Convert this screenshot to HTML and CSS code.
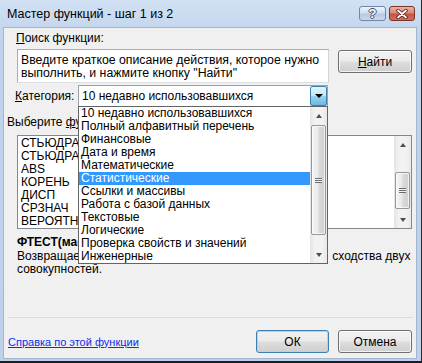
FILE: index.html
```html
<!DOCTYPE html>
<html lang="ru">
<head>
    <meta charset="UTF-8">
    <title>Мастер функций - шаг 1 из 2</title>
    <link rel="stylesheet" href="styles.css">
</head>
<body>
    <div class="window">
        <div class="titlebar">
            <span class="title">Мастер функций - шаг 1 из 2</span>
            <div class="caption-buttons">
                <span class="cap-btn help">?</span>
                <span class="cap-btn close">
                    <svg width="12" height="10" viewBox="0 0 12 10">
                        <path d="M2 1.5 L10 8.5 M10 1.5 L2 8.5" stroke="#4a1a14" stroke-width="3.4" stroke-linecap="round"/>
                        <path d="M2 1.5 L10 8.5 M10 1.5 L2 8.5" stroke="#ffffff" stroke-width="1.8" stroke-linecap="round"/>
                    </svg>
                </span>
            </div>
        </div>

        <div class="client">
            <div class="search-label"><u>П</u>оиск функции:</div>
            <div class="search-row">
                <div class="search-box">Введите краткое описание действия, которое нужно<br>выполнить, и нажмите кнопку "Найти"</div>
                <button class="btn find-btn"><u>Н</u>айти</button>
            </div>

            <div class="category-row">
                <span class="category-label"><u>К</u>атегория:</span>
                <div class="combo">
                    <span class="combo-text">10 недавно использовавшихся</span>
                    <span class="combo-arrow"><span class="tri-down dark"></span></span>
                </div>
            </div>

            <div class="func-label">Выберите <u>ф</u>ункцию:</div>
            <div class="func-list">
                <div class="func-items">
                    <div>СТЬЮДРАСП</div>
                    <div>СТЬЮДРАСПОБР</div>
                    <div>ABS</div>
                    <div>КОРЕНЬ</div>
                    <div>ДИСП</div>
                    <div>СРЗНАЧ</div>
                    <div>ВЕРОЯТНОСТЬ</div>
                </div>
                <div class="scrollbar">
                    <div class="sb-arrow"><span class="tri-up"></span></div>
                    <div class="sb-track"><div class="sb-thumb small"><span class="grip"></span></div></div>
                    <div class="sb-arrow"><span class="tri-down"></span></div>
                </div>
            </div>

            <div class="func-sig">ФТЕСТ(массив1;массив2)</div>
            <div class="func-desc">
                <div class="desc-line"><span class="desc-lead">Возвращает результат F-теста, вероятность</span> сходства двух</div>
                <div class="desc-line">совокупностей.</div>
            </div>

            <div class="footer">
                <div class="separator"></div>
                <div class="footer-row">
                    <a class="help-link" href="#">Справка по этой функции</a>
                    <button class="btn ok-btn">ОК</button>
                    <button class="btn cancel-btn">Отмена</button>
                </div>
            </div>
        </div>

        <div class="dropdown">
            <div class="dd-items">
                <div>10 недавно использовавшихся</div>
                <div>Полный алфавитный перечень</div>
                <div>Финансовые</div>
                <div>Дата и время</div>
                <div>Математические</div>
                <div class="selected">Статистические</div>
                <div>Ссылки и массивы</div>
                <div>Работа с базой данных</div>
                <div>Текстовые</div>
                <div>Логические</div>
                <div>Проверка свойств и значений</div>
                <div>Инженерные</div>
            </div>
            <div class="scrollbar">
                <div class="sb-arrow"><span class="tri-up"></span></div>
                <div class="sb-track"><div class="sb-thumb large"><span class="grip"></span></div></div>
                <div class="sb-arrow"><span class="tri-down"></span></div>
            </div>
        </div>
    </div>
</body>
</html>
```

FILE: styles.css
```css
* {
    box-sizing: border-box;
}
body {
    margin: 0;
    font-family: "Liberation Sans", Arial, sans-serif;
    font-size: 12px;
    color: #000;
}
u {
    text-decoration: underline;
}
.window {
    position: relative;
    width: 422px;
    height: 363px;
    display: flex;
    flex-direction: column;
    padding: 0 4px 2px 3px;
    background: linear-gradient(#d2e1f3, #bfd3ec 40px, #bdd1ea);
    border-right: 1px solid #2a2a2a;
    border-bottom: 2px solid #1c1c1c;
}

/* title bar */
.titlebar {
    height: 27px;
    display: flex;
    align-items: flex-start;
    justify-content: space-between;
}
.title {
    margin: 6px 0 0 4px;
    font-size: 12.5px;
    line-height: 16px;
}
.caption-buttons {
    display: flex;
    gap: 3px;
    margin: 6px 2px 0 0;
}
.cap-btn {
    height: 15px;
    border-radius: 3px;
    display: flex;
    align-items: center;
    justify-content: center;
}
.cap-btn.help {
    width: 27px;
    border: 1px solid #7187a8;
    background: linear-gradient(#edf3fa, #d0deef 45%, #b7cae3 55%, #c8d8ed);
    color: #fff;
    font-weight: bold;
    font-size: 13px;
    line-height: 13px;
    text-shadow: 1px 0 #3c4d66, -1px 0 #3c4d66, 0 1px #3c4d66, 0 -1px #3c4d66;
}
.cap-btn.close {
    width: 26px;
    border: 1px solid #7c3328;
    background: linear-gradient(#eab2a6, #d98a7a 45%, #c4533f 55%, #d0705d);
}

/* client area */
.client {
    flex: 1;
    display: flex;
    flex-direction: column;
    background: #f0f0f0;
    border: 1px solid #a3b6cf;
}
.search-label {
    margin: 3px 0 0 12px;
    line-height: 15px;
}
.search-row {
    display: flex;
    align-items: flex-start;
    margin: 3px 0 0 13px;
}
.search-box {
    width: 312px;
    height: 34px;
    padding: 4px 3px 0;
    font-size: 12.3px;
    line-height: 13px;
    background: #fff;
    border: 1px solid #abadb3;
    border-bottom-color: #dcdfe4;
    border-right-color: #cfd3da;
}
.btn {
    height: 23px;
    padding: 0;
    font-family: inherit;
    font-size: 12px;
    color: #000;
    border: 1px solid #707070;
    border-radius: 3px;
    background: linear-gradient(#f2f2f2, #ebebeb 48%, #dddddd 52%, #cfcfcf);
    box-shadow: inset 0 0 0 1px rgba(255,255,255,0.75);
}
.find-btn {
    width: 74px;
    margin: 1px 0 0 9px;
}
.category-row {
    display: flex;
    align-items: center;
    margin: 2px 0 0 11px;
}
.category-label {
    width: 63px;
    line-height: 15px;
}
.combo {
    width: 250px;
    height: 22px;
    display: flex;
    align-items: center;
    background: #fff;
    border: 1px solid #9aa3ad;
}
.combo-text {
    flex: 1;
    padding-left: 3px;
}
.combo-arrow {
    width: 17px;
    height: 20px;
    display: flex;
    align-items: center;
    justify-content: center;
    border: 1px solid #3c7fb1;
    border-radius: 2px;
    background: linear-gradient(#e5f4fc, #c4e5f6 48%, #98d1ef 52%, #6cb8e0);
}
.func-label {
    margin: 8px 0 0 3px;
    line-height: 15px;
}
.func-list {
    display: flex;
    width: 395px;
    height: 94px;
    margin: 5px 0 0 13px;
    background: #fff;
    border: 1px solid #828790;
}
.func-items {
    flex: 1;
    padding: 1px 0 0 3px;
    line-height: 13px;
}
.func-sig {
    margin: 6px 0 0 13px;
    font-weight: bold;
    line-height: 14px;
}
.func-desc {
    margin: 1px 0 0 13px;
    line-height: 13px;
}
.desc-line {
    white-space: nowrap;
}
.desc-lead {
    display: inline-block;
    width: 312px;
    vertical-align: top;
}
.footer {
    margin-top: auto;
    padding-bottom: 5px;
}
.separator {
    height: 1px;
    margin: 0 3px 0 4px;
    background: #d5dde6;
}
.footer-row {
    display: flex;
    align-items: center;
    margin-top: 12px;
    padding: 0 4px;
}
.help-link {
    color: #0b2ee8;
    font-size: 11px;
    text-decoration: underline;
    margin-right: auto;
}
.ok-btn {
    width: 73px;
    border-color: #3c7fb1;
    box-shadow: inset 0 0 0 1px #a6d8f6;
}
.cancel-btn {
    width: 74px;
    margin-left: 9px;
}

/* scrollbars */
.scrollbar {
    width: 17px;
    display: flex;
    flex-direction: column;
    background: linear-gradient(90deg, #e4e4e4, #f2f2f2 30%, #f2f2f2 70%, #e8e8e8);
}
.sb-arrow {
    height: 17px;
    flex: none;
    display: flex;
    align-items: center;
    justify-content: center;
}
.sb-track {
    flex: 1;
}
.sb-thumb {
    margin: 0 1px;
    display: flex;
    align-items: center;
    justify-content: center;
    border: 1px solid #979797;
    border-radius: 2px;
    background: linear-gradient(90deg, #f4f4f4, #e9e9e9 45%, #d9d9d9 55%, #d0d0d0);
    box-shadow: inset 0 0 0 1px rgba(255,255,255,0.7);
}
.sb-thumb.large {
    margin-top: 1px;
    height: 110px;
}
.sb-thumb.small {
    margin-top: 19px;
    height: 37px;
}
.grip {
    width: 7px;
    height: 5px;
    background: repeating-linear-gradient(#6b6b6b 0 1px, #f4f4f4 1px 2px);
}
.tri-up {
    width: 0;
    height: 0;
    border-left: 3.5px solid transparent;
    border-right: 3.5px solid transparent;
    border-bottom: 4px solid #4f4f4f;
}
.tri-down {
    width: 0;
    height: 0;
    border-left: 3.5px solid transparent;
    border-right: 3.5px solid transparent;
    border-top: 4px solid #4f4f4f;
}
.tri-down.dark {
    border-left-width: 4px;
    border-right-width: 4px;
    border-top: 4px solid #000;
}

/* open category list */
.dropdown {
    position: absolute;
    left: 78px;
    top: 106px;
    width: 250px;
    height: 158px;
    display: flex;
    background: #fff;
    border: 1px solid #646464;
}
.dd-items {
    flex: 1;
    line-height: 13px;
}
.dd-items div {
    padding-left: 2px;
    white-space: nowrap;
    overflow: hidden;
}
.dd-items .selected {
    color: #fff;
    background: #3399ff;
    outline: 1px dotted #b07a3a;
    outline-offset: -1px;
}
```
